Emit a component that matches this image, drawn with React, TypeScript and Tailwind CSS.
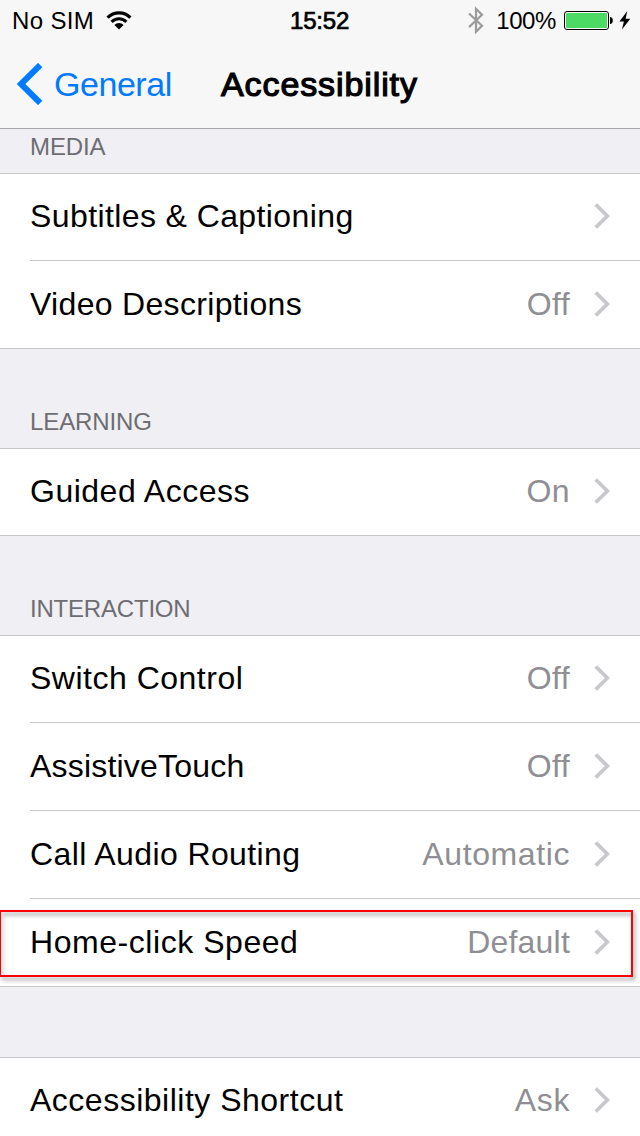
import React from 'react'
import clsx from 'clsx'

type Item = {
  label: string
  value?: string
  tracking: string
  valueTracking?: string
  highlighted?: boolean
}

type Section = {
  title?: string
  heading: string
  items: Item[]
}

const sections: Section[] = [
  {
    title: 'MEDIA',
    heading: 'h-[44px] tracking-[-0.1px]',
    items: [
      { label: 'Subtitles & Captioning', tracking: 'tracking-[0.4px]' },
      {
        label: 'Video Descriptions',
        value: 'Off',
        tracking: 'tracking-[0.32px]',
        valueTracking: 'tracking-[0.4px]',
      },
    ],
  },
  {
    title: 'LEARNING',
    heading: 'h-[99px] tracking-[-0.1px]',
    items: [
      {
        label: 'Guided Access',
        value: 'On',
        tracking: 'tracking-[0.5px]',
        valueTracking: 'tracking-[0.4px]',
      },
    ],
  },
  {
    title: 'INTERACTION',
    heading: 'h-[99px] tracking-[-0.2px]',
    items: [
      {
        label: 'Switch Control',
        value: 'Off',
        tracking: 'tracking-[0.5px]',
        valueTracking: 'tracking-[0.4px]',
      },
      {
        label: 'AssistiveTouch',
        value: 'Off',
        tracking: 'tracking-[0.2px]',
        valueTracking: 'tracking-[0.4px]',
      },
      {
        label: 'Call Audio Routing',
        value: 'Automatic',
        tracking: 'tracking-[0.4px]',
        valueTracking: 'tracking-[0.6px]',
      },
      {
        label: 'Home-click Speed',
        value: 'Default',
        tracking: 'tracking-[0.55px]',
        valueTracking: 'tracking-[0.2px]',
        highlighted: true,
      },
    ],
  },
  {
    heading: 'h-[70px]',
    items: [
      {
        label: 'Accessibility Shortcut',
        value: 'Ask',
        tracking: 'tracking-[0.5px]',
        valueTracking: 'tracking-[0.6px]',
      },
    ],
  },
]

const WifiIcon: React.FC = () => (
  <svg className="w-[26px] h-[20px]" viewBox="0 0 26 20" fill="none">
    <path d="M1.6 6.6a16 16 0 0 1 22.8 0" stroke="#000" strokeWidth="3.2" />
    <path d="M5.6 10.9a10.4 10.4 0 0 1 14.8 0" stroke="#000" strokeWidth="3" />
    <path d="M8.4 14a6.4 6.4 0 0 1 9.2 0L13 18.6Z" fill="#000" />
  </svg>
)

const BluetoothIcon: React.FC = () => (
  <svg className="w-[16px] h-[28px]" viewBox="0 0 16 28" fill="none">
    <path
      d="M1 7.5 14 19.8 8 25.8V2.8L14 8.8 1 21.1"
      stroke="#9b9b9b"
      strokeWidth="2.2"
    />
  </svg>
)

const BatteryIcon: React.FC = () => (
  <svg className="w-[49px] h-[19px]" viewBox="0 0 49 19" fill="none">
    <rect x="0.5" y="0.5" width="44" height="18" rx="2.5" stroke="#000" />
    <rect x="2" y="2" width="41" height="15" rx="1" fill="#4cd964" />
    <path d="M46 6c1.8 0 2.8 1.5 2.8 3.5S47.8 13 46 13Z" fill="#000" />
  </svg>
)

const BoltIcon: React.FC = () => (
  <svg className="w-[12px] h-[19px]" viewBox="0 0 12 19">
    <path d="M8.3 0 .4 10.5h4.5L2.9 18.5 11.3 7.7H6.6Z" fill="#000" />
  </svg>
)

const Chevron: React.FC = () => (
  <svg className="w-[16px] h-[26px]" viewBox="0 0 16 26" fill="none">
    <path d="M1.7 1.5 13.4 13 1.7 24.5" stroke="#c7c7cc" strokeWidth="3.8" />
  </svg>
)

const StatusBar: React.FC = () => (
  <div className="h-10 pl-3 pr-[9px] grid grid-cols-[278px_1fr_auto] items-center text-2xl leading-[38px]">
    <div className="flex items-center gap-3">
      <span className="pt-0.5 tracking-[0.35px]">No SIM</span>
      <span className="pt-0.5">
        <WifiIcon />
      </span>
    </div>
    <span className="pt-0.5 tracking-[-0.2px] [-webkit-text-stroke:0.7px_black]">
      15:52
    </span>
    <div className="flex items-center">
      <BluetoothIcon />
      <span className="pt-0.5 ml-3 mr-[8px] tracking-[-0.4px]">100%</span>
      <BatteryIcon />
      <span className="ml-[6px]">
        <BoltIcon />
      </span>
    </div>
  </div>
)

const NavBar: React.FC = () => (
  <div className="h-[88px] pl-4 flex items-center text-[34px] leading-[88px]">
    <button className="w-[205px] flex items-center text-[#007aff]">
      <svg className="w-[27px] h-[42px] mr-[11px]" viewBox="0 0 27 42" fill="none">
        <path d="M24.2 2 5 21 24.2 40" stroke="#007aff" strokeWidth="6" />
      </svg>
      <span className="tracking-[-0.45px]">General</span>
    </button>
    <h1 className="tracking-[0.9px] [-webkit-text-stroke:1.2px_black]">
      Accessibility
    </h1>
  </div>
)

const Row: React.FC<{ item: Item }> = ({ item }) => (
  <div className="group relative pl-[30px] h-[88px] first:h-[87px] border-[#c8c7cc] last:border-b">
    <div className="h-full pr-[30px] flex items-end border-b border-[#c8c7cc] group-last:border-b-0 text-[32px] leading-[87px]">
      <span className={clsx('flex-1', item.tracking)}>{item.label}</span>
      <span className={clsx('mr-6 text-[#8e8e93]', item.valueTracking)}>
        {item.value}
      </span>
      <span className="mb-[31px]">
        <Chevron />
      </span>
    </div>
    {item.highlighted && (
      <div className="absolute left-0 top-[11px] w-[633px] h-[67px] border-2 border-l border-[#ff0000] drop-shadow-[2px_3px_2px_rgba(0,0,0,0.45)]"></div>
    )}
  </div>
)

const App: React.FC = () => {
  return (
    <div className="w-[640px] h-[1136px] overflow-hidden bg-[#efeff4] text-black font-['Liberation_Sans',Arial,sans-serif]">
      <header className="h-[129px] bg-[#f7f7f7] border-b border-[#a7a7aa]">
        <StatusBar />
        <NavBar />
      </header>
      {sections.map((section) => (
        <section key={section.items[0].label}>
          <div
            className={clsx(
              'pl-[30px] pb-3 flex items-end text-2xl leading-7 text-[#6d6d72]',
              section.heading
            )}
          >
            {section.title}
          </div>
          <div className="bg-white border-t border-[#c8c7cc]">
            {section.items.map((item) => (
              <Row key={item.label} item={item} />
            ))}
          </div>
        </section>
      ))}
    </div>
  )
}

export default App
